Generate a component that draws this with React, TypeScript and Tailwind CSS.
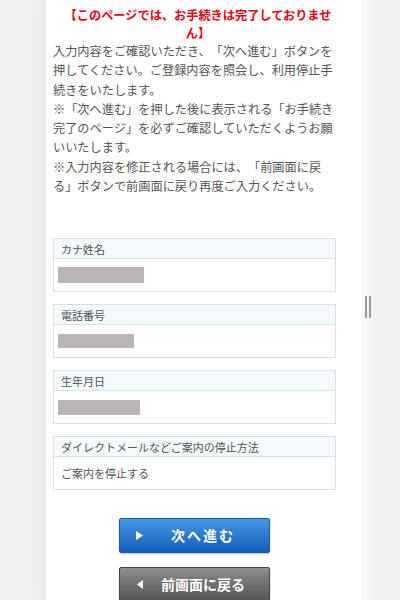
const font = { fontFamily: '"Noto Sans CJK JP", "Noto Sans", sans-serif' };

type Field = { label: string; bar?: [number, number]; value?: string };

const fields: Field[] = [
  { label: 'カナ姓名', bar: [86, 16] },
  { label: '電話番号', bar: [76, 14] },
  { label: '生年月日', bar: [82, 15] },
  { label: 'ダイレクトメールなどご案内の停止方法', value: 'ご案内を停止する' },
];

const bodyLines = [
  '入力内容をご確認いただき、「次へ進む」ボタンを',
  '押してください。ご登録内容を照会し、利用停止手',
  '続きをいたします。',
  '※「次へ進む」を押した後に表示される「お手続き',
  '完了のページ」を必ずご確認していただくようお願',
  'いいたします。',
  '※入力内容を修正される場合には、「前画面に戻',
  'る」ボタンで前画面に戻り再度ご入力ください。',
];

function FieldBox({ field }: { field: Field }) {
  return (
    <div className="border border-[#dcdfe1] bg-white">
      <div className="flex h-[20px] items-center border-b border-[#d5e2e8] bg-[#f3f9fc] px-[7px] text-[11px] text-[#555]">
        {field.label}
      </div>
      <div className="flex h-[32px] items-center pl-[4px] text-[11px] text-[#555]">
        {field.bar ? (
          <div className="bg-[#bab5b5]" style={{ width: field.bar[0], height: field.bar[1] }} />
        ) : (
          <span className="pl-[3px]">{field.value}</span>
        )}
      </div>
    </div>
  );
}

export default function App() {
  return (
    <div
      className="flex h-[600px] w-[400px] overflow-hidden bg-[#f0f0f0] [text-spacing-trim:space-all]"
      style={font}
    >
      <div className="ml-[46px] w-[315px] shrink-0 bg-white pl-[7px] pt-[6px] shadow-[0_0_14px_rgba(0,0,0,0.07)]">
        <div className="w-[290px] text-center text-[12.2px] font-bold leading-[18px] text-[#e50012]">
          <div className="whitespace-nowrap">【このページでは、お手続きは完了しておりませ</div>
          <div>ん】</div>
        </div>
        <div className="text-[12.2px] leading-[19.3px] text-[#555]">
          {bodyLines.map((l) => (
            <div key={l} className="whitespace-nowrap">
              {l}
            </div>
          ))}
        </div>

        <div className="mt-[42px] flex w-[283px] flex-col gap-[12px]">
          {fields.map((f) => (
            <FieldBox key={f.label} field={f} />
          ))}
        </div>

        <div className="mt-[28px] flex w-[283px] flex-col items-center gap-[14px]">
          <button className="flex h-[35px] w-[151px] items-center rounded-[2px] border border-[#1a5aa6] bg-gradient-to-b from-[#4598e6] to-[#135db8] pl-[16px] text-white shadow-[0_1px_2px_rgba(0,0,0,0.25)]">
            <svg width="7" height="9" viewBox="0 0 7 9">
              <polygon points="0,0 7,4.5 0,9" fill="white" />
            </svg>
            <span className="ml-[28px] text-[14px] font-bold tracking-[2px]">次へ進む</span>
          </button>
          <button className="flex h-[35px] w-[151px] items-center rounded-[2px] border border-[#444] bg-gradient-to-b from-[#8e8e8e] to-[#545454] pl-[17px] text-white shadow-[0_1px_2px_rgba(0,0,0,0.25)]">
            <svg width="6" height="9" viewBox="0 0 6 9">
              <polygon points="6,0 0,4.5 6,9" fill="white" />
            </svg>
            <span className="ml-[18px] text-[14px] font-bold">前画面に戻る</span>
          </button>
        </div>
      </div>

      <div className="flex w-[14px] shrink-0 items-center justify-center bg-gradient-to-r from-[#fafafa] to-[#f3f3f3]">
        <div className="mt-[14px] flex h-[22px] gap-[2px]">
          <div className="w-[2px] bg-[#9a9a9a]" />
          <div className="w-[2px] bg-[#9a9a9a]" />
        </div>
      </div>
    </div>
  );
}
